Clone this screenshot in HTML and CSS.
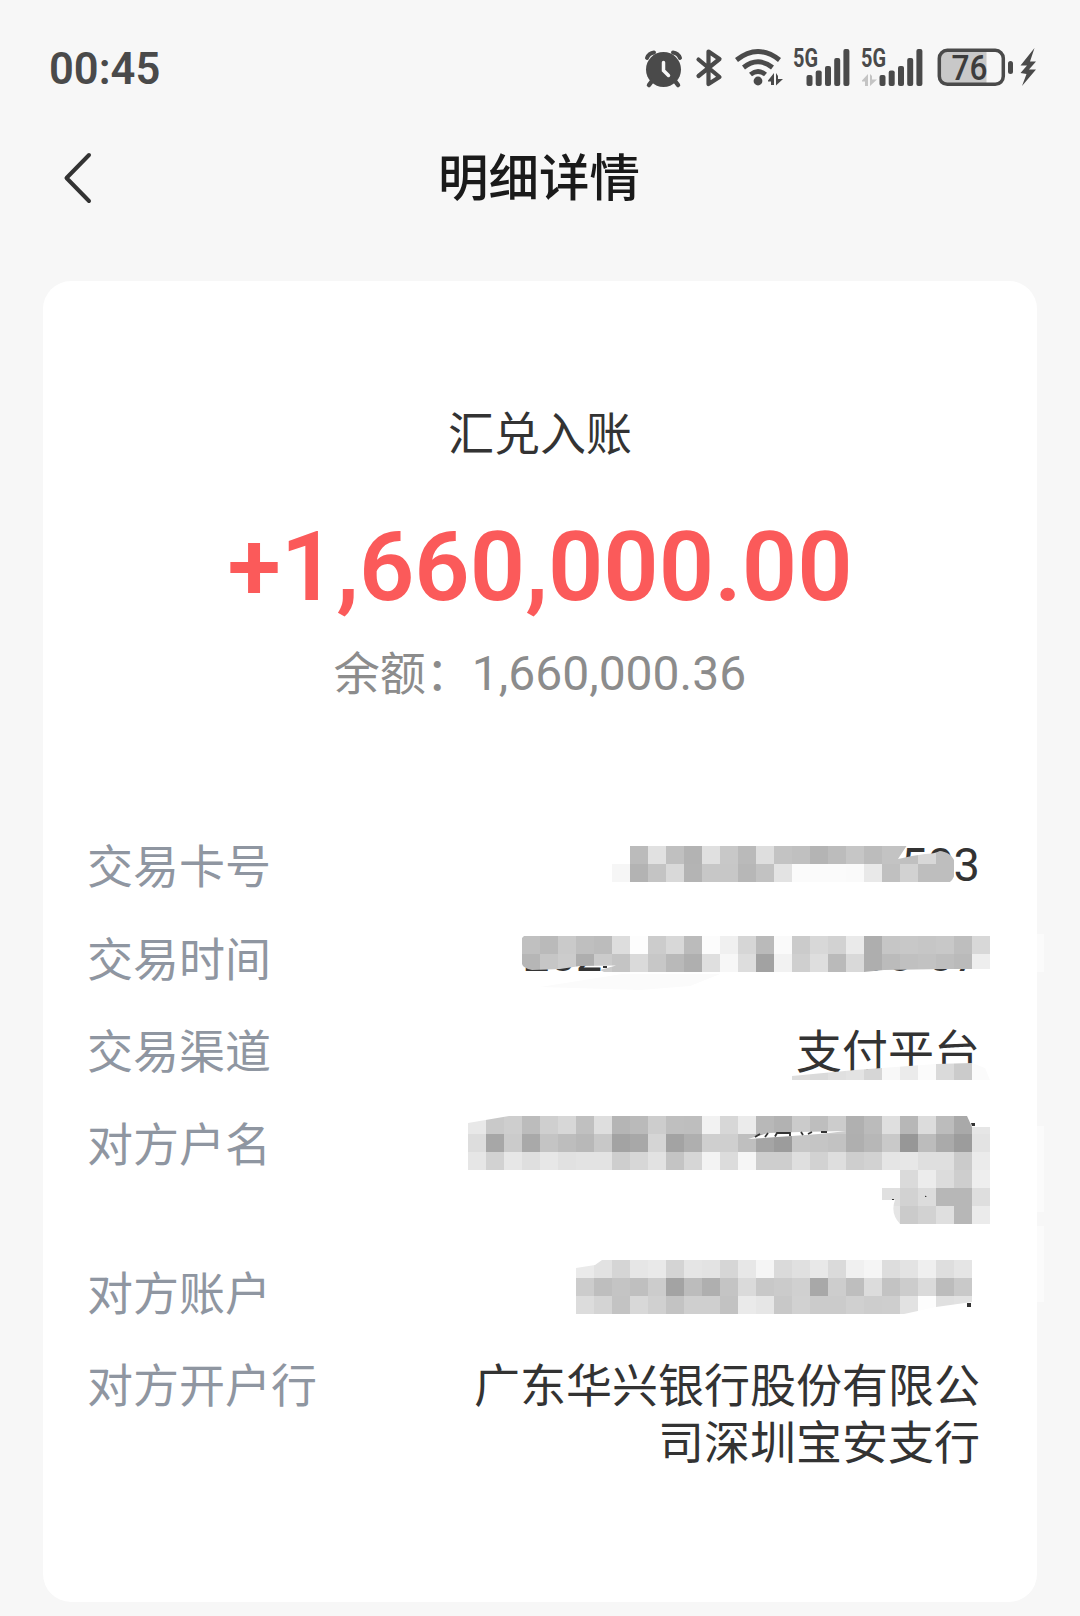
FILE: index.html
```html
<!DOCTYPE html>
<html lang="zh-CN">
<head>
    <meta charset="UTF-8">
    <meta name="viewport" content="width=device-width, initial-scale=1.0">
    <title>明细详情</title>
    <link rel="stylesheet" href="styles.css">
</head>
<body>
    <div class="page">
        <div class="status-bar">
            <span class="clock">00:45</span>
            <svg class="status-icons" width="400" height="60" viewBox="640 38 400 60">
                <!-- alarm -->
                <g fill="none" stroke="#4a4a4a" stroke-linecap="round">
                    <circle cx="663.5" cy="69.5" r="17.5" fill="#4a4a4a" stroke="none"/>
                    <path d="M647 58Q649 53 654 52.500M673 52.500Q678 53 680 58" stroke-width="4"/>
                    <path d="M652 81L649 85M675 81L678 85" stroke-width="4.500"/>
                    <path d="M663.500 62.500V70.500L668.500 75.500" stroke="#f7f7f7" stroke-width="3.500"/>
                </g>
                <!-- bluetooth -->
                <path d="M698.500 59.500L719.500 77L708.500 84V51.500L719.500 59L698.500 76" fill="none" stroke="#4a4a4a" stroke-width="4.200" stroke-linecap="round" stroke-linejoin="round"/>
                <!-- wifi -->
                <g fill="none" stroke="#4a4a4a" stroke-width="4.800">
                    <path d="M736.500 60Q758 43 779.500 60M743.500 67.500Q758 56 772.500 67.500M750.500 74.500Q758 68.500 765.500 74.500"/>
                    <circle cx="758" cy="81" r="4.400" fill="#4a4a4a" stroke="none"/>
                </g>
                <path d="M768 80.500L774 73V85H771V81.500H768ZM776 73L778 76V79H783L776 85.500Z" fill="#4a4a4a"/>
                <!-- signal 1 -->
                <text class="net" x="793" y="67" textLength="25" lengthAdjust="spacingAndGlyphs">5G</text>
                <g fill="#4a4a4a">
                    <rect x="806.500" y="75" width="6" height="11" rx="2"/>
                    <rect x="815.700" y="70.500" width="6" height="15.500" rx="2"/>
                    <rect x="825" y="66" width="6" height="20" rx="2"/>
                    <rect x="834.200" y="58" width="6" height="28" rx="2"/>
                    <rect x="843.400" y="49" width="6" height="37" rx="2"/>
                </g>
                <!-- signal 2 -->
                <text class="net" x="861" y="67" textLength="25" lengthAdjust="spacingAndGlyphs">5G</text>
                <path d="M862 80.500L868 74V86H865V81.500H862ZM870 74L872 76V79.500H877L870 86Z" fill="#c4c4c4"/>
                <g fill="#4a4a4a">
                    <rect x="879.500" y="75" width="6" height="11" rx="2"/>
                    <rect x="888.700" y="70.500" width="6" height="15.500" rx="2"/>
                    <rect x="898" y="66" width="6" height="20" rx="2"/>
                    <rect x="907.200" y="58" width="6" height="28" rx="2"/>
                    <rect x="916.400" y="49" width="6" height="37" rx="2"/>
                </g>
                <!-- battery -->
                <path d="M946 52H986.500V83H946Q940 83 940 77V58Q940 52 946 52Z" fill="#c8c8c8"/>
                <rect x="939.300" y="50.300" width="64" height="34" rx="8" fill="none" stroke="#4a4a4a" stroke-width="3.500"/>
                <rect x="1008" y="61" width="5" height="13" rx="2.500" fill="#4a4a4a"/>
                <text class="level" x="951.500" y="79.500" textLength="36" lengthAdjust="spacingAndGlyphs">76</text>
                <path d="M1034.500 48L1020.500 65.500H1027L1020.500 73L1026.500 74L1022 86L1036 69.500H1029L1036 61.500H1030Z" fill="#4a4a4a"/>
            </svg>
        </div>

        <div class="nav-bar">
            <svg class="back" width="34" height="54" viewBox="0 0 34 54">
                <path d="M29 4L6.500 27L29 50" fill="none" stroke="#333" stroke-width="4" stroke-linecap="round" stroke-linejoin="round"/>
            </svg>
            <h1 class="title">明细详情</h1>
        </div>

        <div class="card">
            <div class="type">汇兑入账</div>
            <div class="amount">+1,660,000.00</div>
            <div class="balance">余额：<span class="num">1,660,000.36</span></div>

            <div class="rows">
                <div class="row">
                    <span class="label">交易卡号</span>
                    <span class="value digits">503</span>
                </div>
                <div class="row">
                    <span class="label">交易时间</span>
                    <span class="value digits time"><span class="year">202</span><span>0</span><span>00</span><span>07</span></span>
                </div>
                <div class="row">
                    <span class="label">交易渠道</span>
                    <span class="value">支付平台</span>
                </div>
                <div class="row two-line">
                    <span class="label">对方户名</span>
                </div>
                <div class="row">
                    <span class="label">对方账户</span>
                </div>
                <div class="row">
                    <span class="label">对方开户行</span>
                    <span class="value">广东华兴银行股份有限公司深圳宝安支行</span>
                </div>
            </div>
        </div>

        <svg class="mosaic" id="mosaic" width="1080" height="1616" viewBox="0 0 1080 1616">
            <defs>
                <clipPath id="clip-card"><path d="M612 846H906.500L898 859L912 856L925 854Q934 854 940 851Q955 853 955.700 868Q955 878 950 882H612Z"/></clipPath>
                <clipPath id="clip-time"><path d="M522 938L524 936H990V969H945L884 970L864 972H604L600 970L616 965.500L580 966L560 969L547 969.500L532 970Q523 968 522 964Z"/></clipPath>
                <clipPath id="clip-channel"><path d="M792 1076L855 1070L909 1066L936 1064L972 1063L985 1068L990 1080H792Z"/></clipPath>
                <clipPath id="clip-name"><path d="M468 1123L509 1116H967L972 1127H990V1224H900Q890 1213 895 1200H882V1188H900V1170H468Z"/></clipPath>
                <clipPath id="clip-account"><path d="M576 1268L595 1265L602 1260H972V1302L936 1307L904 1314H576Z"/></clipPath>
            </defs>
            <g fill="#fbfbfb">
                <path d="M540 987L622 974H720L690 986L640 990Z"/>
                <rect x="1037" y="934" width="7" height="38"/>
                <rect x="1037" y="1126" width="7" height="86"/>
                <rect x="1037" y="1226" width="7" height="76"/>
            </g>
            <g id="cells"></g>
            <path d="M748 1139L768 1133L800 1132L846 1131L825 1133.500L792 1136Z" fill="#fff"/>
            <path d="M755 1137L760 1134M765 1137L768 1133M775 1136.500L777 1133H790V1136M801 1132L803 1135M808 1134L812 1132M821 1132H827" fill="none" stroke="#333" stroke-width="1.800"/>
            <path d="M971 1123H975V1126H972ZM967 1303H971V1307H967ZM892 1199H894V1200H892ZM925 1195.500L927 1197H925Z" fill="#333"/>
            <path d="M603 966H607V968H603Z" fill="#333"/>
        </svg>
    </div>

    <script src="mosaic.js"></script>
</body>
</html>
```
FILE: styles.css
```css
* {
    box-sizing: border-box;
}
body {
    margin: 0;
    background-color: #f7f7f7;
    color: #333;
    font-family: Roboto, "Noto Sans CJK SC", sans-serif;
}
.page {
    position: relative;
    width: 1080px;
    height: 1616px;
    overflow: hidden;
}
.status-bar {
    display: flex;
    justify-content: space-between;
    align-items: center;
    height: 136px;
    padding: 0 40px 0 49px;
}
.clock {
    padding-top: 2px;
    font-size: 43.5px;
    font-weight: 600;
    color: #4a4a4a;
}
.status-icons {
    display: block;
}
.net {
    font-size: 25px;
    font-weight: 700;
    fill: #4a4a4a;
}
.level {
    font-size: 35px;
    font-weight: 500;
    fill: #3c3c3c;
}
.nav-bar {
    display: grid;
    grid-template-columns: 50px 1fr 50px;
    align-items: center;
    height: 84px;
    padding: 0 62px 0 60px;
}
.title {
    margin: 0;
    padding-top: 2px;
    font-size: 50.5px;
    font-weight: 500;
    line-height: 82px;
    text-align: center;
    color: #1a1a1a;
}
.card {
    height: 1321px;
    margin: 61px 43px 0;
    padding: 123px 44px 0;
    background-color: #fff;
    border-radius: 28px;
}
.type {
    font-size: 46px;
    line-height: 60px;
    text-align: center;
}
.amount {
    margin-top: 45px;
    font-size: 97px;
    font-weight: 600;
    line-height: 116px;
    text-align: center;
    white-space: nowrap;
    color: #fb5a5a;
}
.balance {
    margin-top: 19px;
    font-size: 46px;
    line-height: 60px;
    text-align: center;
    color: #8c8c8c;
}
.num {
    font-size: 48px;
}
.rows {
    display: flex;
    flex-direction: column;
    gap: 36px;
    margin-top: 135px;
}
.row {
    display: flex;
    justify-content: space-between;
    font-size: 46px;
    line-height: 56.5px;
}
.two-line {
    height: 113px;
}
.label {
    color: #8f96a1;
}
.value {
    max-width: 508px;
    margin-right: 13px;
    text-align: right;
}
.digits {
    font-size: 47px;
    line-height: 51px;
}
.time {
    display: flex;
    gap: 14px;
    width: 457px;
    line-height: 45px;
}
.year {
    margin-right: auto;
}
.mosaic {
    position: absolute;
    top: 0;
    left: 0;
}
```
FILE: mosaic.js
```javascript
// masked areas: one hex grey per 18px cell
const CELL = 18;
const areas = [
    { clip: 'clip-card', rows: [
        [630, 846, 'BB E1 C0 B3 E0 C8 BA DE C3 C0 B4 BC C6 BC C3 C0 D8 BE'],
        [612, 864, 'F6 B3 C4 D9 B4 C7 C7 B7 C2 E3 FB FB FB FA E9 C0 D2 BE BE']
    ] },
    { clip: 'clip-time', rows: [
        [522, 936, 'C0 BA CA BF BC DD FD CC D8 BB FC F0 D6 BA FA CB D8 D2 EA AE C6 C8 C6 C8 BE D8'],
        [522, 954, 'B6 C6 CC AE CB C4 DA C7 B9 AF DF F7 DD A2 F2 CF DE BA D9 AE BB C0 C2 BE BA EE']
    ] },
    { clip: 'clip-channel', rows: [
        [792, 1062, 'DD DA E0 E3 D6 F8 EB FB DA CB FB']
    ] },
    { clip: 'clip-name', rows: [
        [468, 1116, 'E8 C9 CE BC CF D7 C0 DE B5 BA CD BF BE F2 D7 EB B8 B2 CB BE CC B0 BB DF B7 DC BC A9 E6'],
        [468, 1134, 'DD A7 CB A9 C4 BD B8 C8 A3 A8 D5 A3 AF CF CF BF A5 9C C7 C5 C2 AF B7 C9 97 BC AA 9C E3'],
        [468, 1152, 'E6 D2 E7 DF E7 E1 E3 E3 CE D7 E2 C4 D6 F3 DC F6 CE CE DF D2 DE CE D2 E5 E7 DF DF CB EB'],
        [900, 1170, 'DA EC DC CE EE'],
        [882, 1188, 'E0 D2 DC B7 B7 DE'],
        [882, 1206, 'E5 CB D2 DF B7 EB']
    ] },
    { clip: 'clip-account', rows: [
        [576, 1260, 'EA E2 D5 E6 E9 D4 E5 E3 D6 E7 F5 DA E0 E8 DA F0 F5 DD E3 EF DE E5'],
        [576, 1278, 'CC BE C4 BF CC A3 BC AF C4 DA C8 CB D0 A8 CD BE DC C3 CC DA BC C9'],
        [576, 1296, 'DC D4 C3 D8 D0 C3 CF CF C2 EA E6 C8 D1 CB CB D0 CD CE E2 FD E0 E2']
    ] }
];

document.getElementById('cells').innerHTML = areas.map(area => {
    const rects = area.rows.map(([x, y, shades]) => shades.split(' ').map((s, i) =>
        `<rect x="${x + i * CELL}" y="${y}" width="${CELL}" height="${CELL}" fill="#${s}${s}${s}"/>`
    ).join('')).join('');
    return `<g clip-path="url(#${area.clip})">${rects}</g>`;
}).join('');
```
